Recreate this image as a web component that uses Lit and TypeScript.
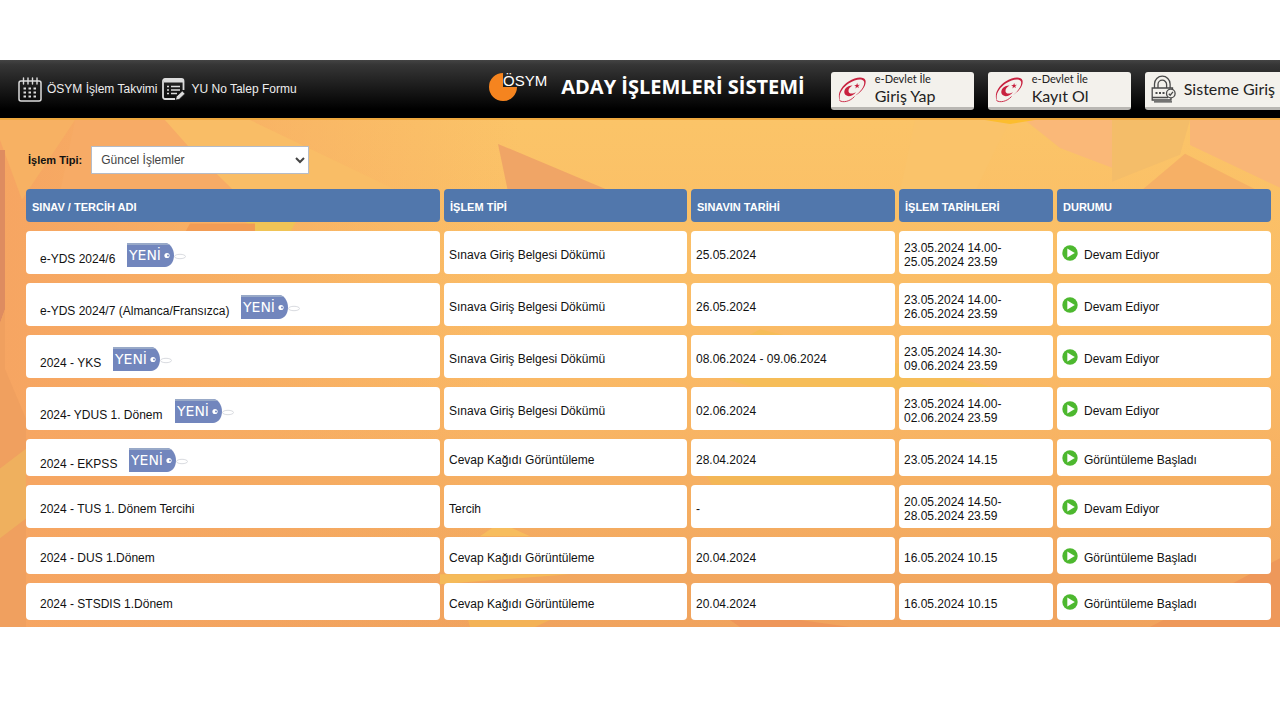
import { LitElement, html, css, svg, unsafeCSS } from "lit";
import { customElement, property, state } from "lit/decorators.js";

interface Exam {
  name: string;
  isNew: boolean;
  type: string;
  date: string;
  period: string[];
  status: string;
}

const DOCUMENT = "Sınava Giriş Belgesi Dökümü";
const ANSWERS = "Cevap Kağıdı Görüntüleme";
const OPEN = "Devam Ediyor";
const STARTED = "Görüntüleme Başladı";

const EXAMS: Exam[] = [
  { name: "e-YDS 2024/6", isNew: true, type: DOCUMENT, date: "25.05.2024", period: ["23.05.2024 14.00-", "25.05.2024 23.59"], status: OPEN },
  { name: "e-YDS 2024/7 (Almanca/Fransızca)", isNew: true, type: DOCUMENT, date: "26.05.2024", period: ["23.05.2024 14.00-", "26.05.2024 23.59"], status: OPEN },
  { name: "2024 - YKS", isNew: true, type: DOCUMENT, date: "08.06.2024 - 09.06.2024", period: ["23.05.2024 14.30-", "09.06.2024 23.59"], status: OPEN },
  { name: "2024- YDUS 1. Dönem", isNew: true, type: DOCUMENT, date: "02.06.2024", period: ["23.05.2024 14.00-", "02.06.2024 23.59"], status: OPEN },
  { name: "2024 - EKPSS", isNew: true, type: ANSWERS, date: "28.04.2024", period: ["23.05.2024 14.15"], status: STARTED },
  { name: "2024 - TUS 1. Dönem Tercihi", isNew: false, type: "Tercih", date: "-", period: ["20.05.2024 14.50-", "28.05.2024 23.59"], status: OPEN },
  { name: "2024 - DUS 1.Dönem", isNew: false, type: ANSWERS, date: "20.04.2024", period: ["16.05.2024 10.15"], status: STARTED },
  { name: "2024 - STSDIS 1.Dönem", isNew: false, type: ANSWERS, date: "20.04.2024", period: ["16.05.2024 10.15"], status: STARTED },
];

const BACKDROP = encodeURIComponent(`<svg xmlns="http://www.w3.org/2000/svg" viewBox="0 0 1280 509" preserveAspectRatio="none">
<defs>
<linearGradient id="v" x1="0" y1="0" x2="0" y2="1"><stop offset="0" stop-color="#fbc468"/><stop offset=".5" stop-color="#fab965"/><stop offset="1" stop-color="#f0a35e"/></linearGradient>
<linearGradient id="l" x1="0" y1="0" x2="1" y2="0"><stop offset="0" stop-color="#f6a562"/><stop offset="1" stop-color="#f6a562" stop-opacity="0"/></linearGradient>
</defs>
<rect width="1280" height="509" fill="url(#v)"/>
<rect width="520" height="509" fill="url(#l)"/>
<path d="M0 0H75L22 80L0 20Z" fill="#f7b163"/>
<path d="M75 0H165L235 72H60Z" fill="#f7ab66"/>
<path d="M165 0H250L400 72H235L188 26Z" fill="#f9bd66"/>
<path d="M220 72H312L290 113H255Z" fill="#f0c456"/>
<path d="M190 104H255V113H185Z" fill="#f29c55"/>
<path d="M498 24L612 72H508Z" fill="#f0a566"/>
<path d="M900 72L915 0H1010L975 72Z" fill="#fac36a"/>
<path d="M1025 0H1112V48L1060 28Z" fill="#fab878"/>
<path d="M1112 0H1190L1180 35L1112 62Z" fill="#f4bd69"/>
<path d="M1190 0H1280V68L1190 25Z" fill="#f9b676"/>
<path d="M1140 72L1185 34L1260 72Z" fill="#f6b066"/>
<path d="M985 0H1035L1010 4Z" fill="#fcbd2e"/>
<path d="M0 30H5V190L0 204Z" fill="#de8c60"/>
<path d="M0 204L5 190V250L26 300V509H0Z" fill="#f0a05f"/>
<path d="M0 350L26 330V400L0 420Z" fill="#efb05e"/>
<path d="M690 250L760 210L1000 270H760Z" fill="#f6bd58"/>
<path d="M480 418L500 404L530 418Z" fill="#f7bd5e"/>
<path d="M706 357H850V366H712Z" fill="#f3b757"/>
<path d="M440 456H570L440 466Z" fill="#f5bb5a"/>
<path d="M468 502H550L535 509H470Z" fill="#f3b257"/>
<path d="M730 502H800L850 509H740Z" fill="#ee965a"/>
<path d="M1150 509L1280 440V509Z" fill="#ee985a"/>
</svg>`);

const calendarIcon = svg`
  <svg viewBox="0 0 24 25" width="24" height="25" aria-hidden="true">
    <g fill="none" stroke="#dcdcdc">
      <rect x="1" y="4" width="22" height="20" rx="2" stroke-width="1.500"/>
      <path d="M5.500 1v6M10 1v6M14.500 1v6M19 1v6" stroke-width="1.400" stroke-linecap="round"/>
      <path d="M5.500 11.500h2.500m2.500 0h2.500m2.500 0h2.500M5.500 15.500h2.500m2.500 0h2.500m2.500 0h2.500M5.500 19.500h2.500m2.500 0h2.500m2.500 0h2.500" stroke-width="2.200"/>
    </g>
  </svg>`;

const formIcon = svg`
  <svg viewBox="0 0 24 24" width="24" height="24" aria-hidden="true">
    <path d="M13 22H3A2 2 0 0 1 1 20V4A2 2 0 0 1 3 2H19.500A2 2 0 0 1 21.500 4V13" fill="none" stroke="#dcdcdc" stroke-width="1.800"/>
    <path d="M2 2.500h19v3H2z" fill="#dcdcdc"/>
    <path d="M5 9.500h2m2 0h9M5 13h2m2 0h9M5 16.500h2m2 0h6" stroke="#dcdcdc" stroke-width="1.700"/>
    <path d="M13.500 23l1-3.600 5.800-5.400 2.700 2.700-5.800 5.600z" fill="#dcdcdc" stroke="#1c1c1c" stroke-width=".7"/>
  </svg>`;

const devletIcon = svg`
  <svg viewBox="0 0 30 27" width="30" height="27" aria-hidden="true">
    <path d="M3.500 25.500C-.5 20 3 11 11.500 5.500C19 .8 27 .2 28.500 4.500C29.600 9.500 24.500 16 18 19.800C24 15.500 28.300 9.500 27 5.500C25.300 2.300 18.500 3 12 7.300C4.500 12.300.8 19.500 3.500 25.500Z" fill="#c8213f"/>
    <path d="M2.500 24.500C6 27 13 25.500 17.500 20.500" fill="none" stroke="#c8213f" stroke-width=".9"/>
    <path d="M15.500 9.500C11 9.300 7 12.500 7.300 16.600C7.700 21 14.500 21.800 19 16.200C15.500 18.300 11.800 18 11.500 15.200C11.300 12.800 13 11 15.500 9.500Z" fill="#c8213f"/>
    <path d="M20.200 7l.6 2 2.200-.2-1.800 1.300.7 2-1.800-1.100-1.600 1.400.4-2.200-1.800-.9 2.200-.4z" fill="#c8213f"/>
  </svg>`;

const lockIcon = svg`
  <svg viewBox="0 0 25 28" width="25" height="28" aria-hidden="true">
    <g fill="none" stroke="#4a4a4a" stroke-width="1.300">
      <path d="M3.500 13V9a7.800 7.800 0 0 1 15.600 0V13M7 13V9.500a4.300 4.300 0 0 1 8.600 0V13"/>
      <path d="M17 22.500H1.200V13H21.500v2M1.200 22.500v2.500H20v-2M3 26.800H21"/>
      <circle cx="19.800" cy="18.500" r="4.300" fill="#f3f1ec"/>
      <path d="M17.800 18.700l1.400 1.500 2.800-3.300"/>
      <path d="M4.500 18h2m1.500 0h2m1.500 0h2" stroke-width="1.800"/>
    </g>
  </svg>`;

@customElement("new-tag")
class NewTag extends LitElement {
  static styles = css`
    :host { display: block; }
    .tag { display: block; font-family: "DejaVu Sans", Verdana, sans-serif; }
  `;

  render() {
    return html`
      <svg class="tag" viewBox="0 0 60 26" width="60" height="26" role="img" aria-label="YENİ">
        <path d="M0 1H38C43 1 47 7 47 13.500S43 25 38 25H0Z" fill="#7286bd"/>
        <path d="M0 1H38C40 1 42 2 43 3H0Z" fill="#98a9c8"/>
        <text x="2" y="18" fill="#fff" font-size="14">YENİ</text>
        <circle cx="40" cy="13.500" r="2.600" fill="#fff"/>
        <circle cx="41" cy="13.500" r="1" fill="#7286bd"/>
        <ellipse cx="53" cy="14.500" rx="5.500" ry="2.200" fill="none" stroke="#d9dbe0" stroke-width="1"/>
      </svg>
    `;
  }
}

@customElement("exam-table")
class ExamTable extends LitElement {
  @property({ attribute: false }) exams: Exam[] = [];

  static styles = css`
    :host { display: block; }
    .table {
      width: 100%;
      table-layout: fixed;
      border-collapse: separate;
      border-spacing: 4px 9px;
      font-size: 12px;
      line-height: 14px;
      color: #111;
    }
    .c-name { width: 414px; }
    .c-type { width: 243px; }
    .c-date { width: 204px; }
    .c-period { width: 154px; }
    .c-status { width: 214px; }
    .head {
      box-sizing: border-box;
      height: 33px;
      padding: 2px 6px 0;
      border-radius: 4px;
      background: #5177ac;
      color: #fff;
      font-size: 11px;
      font-weight: bold;
      text-align: left;
    }
    .cell {
      box-sizing: border-box;
      height: 37px;
      padding: 10px 5px 5px;
      border-radius: 4px;
      background: #fff;
      vertical-align: middle;
    }
    .name-cell { padding: 8px 5px 3px 14px; }
    .name { display: flex; align-items: flex-end; gap: 12px; line-height: 18px; }
    .line { display: block; }
    .status { display: flex; align-items: center; gap: 6px; }
    .play { flex: none; margin-bottom: 4px; }
  `;

  render() {
    return html`
      <table class="table">
        <colgroup>
          <col class="c-name"><col class="c-type"><col class="c-date"><col class="c-period"><col class="c-status">
        </colgroup>
        <thead>
          <tr>
            ${["SINAV / TERCİH ADI", "İŞLEM TİPİ", "SINAVIN TARİHİ", "İŞLEM TARİHLERİ", "DURUMU"].map(
              (title) => html`<th class="head" scope="col">${title}</th>`,
            )}
          </tr>
        </thead>
        <tbody>
          ${this.exams.map(
            (exam) => html`
              <tr>
                <td class="cell name-cell">
                  <div class="name"><span>${exam.name}</span>${exam.isNew ? html`<new-tag></new-tag>` : null}</div>
                </td>
                <td class="cell">${exam.type}</td>
                <td class="cell">${exam.date}</td>
                <td class="cell">${exam.period.map((line) => html`<span class="line">${line}</span>`)}</td>
                <td class="cell">
                  <div class="status">
                    <svg class="play" viewBox="0 0 16 16" width="16" height="16" aria-hidden="true">
                      <circle cx="8" cy="8" r="7.700" fill="#4db82f"/>
                      <path d="M5.300 3.600L12.800 8L5.300 12.400Z" fill="#fff"/>
                    </svg>
                    <span>${exam.status}</span>
                  </div>
                </td>
              </tr>
            `,
          )}
        </tbody>
      </table>
    `;
  }
}

@customElement("app-root")
class AppRoot extends LitElement {
  @state() private filter = "Güncel İşlemler";

  static styles = css`
    :host {
      display: block;
      padding: 60px 0;
      overflow: hidden;
      background: #fff;
      font-family: "Liberation Sans", Arial, sans-serif;
    }
    .bar {
      display: grid;
      grid-template-columns: 1fr auto 1fr;
      align-items: center;
      height: 58px;
      background: linear-gradient(#444 0, #363636 8%, #000 85%);
      color: #fff;
    }
    .links { display: flex; align-items: center; gap: 5px; padding-left: 18px; }
    .link {
      display: flex;
      align-items: center;
      gap: 5px;
      color: #eee;
      font-size: 12px;
      line-height: 14px;
      text-decoration: none;
      white-space: nowrap;
    }
    .brand { display: flex; align-items: center; gap: 12px; padding: 0 0 4px 14px; }
    .title { margin: 0; font: 700 20px/24px "Open Sans", sans-serif; white-space: nowrap; }
    .actions { display: flex; gap: 14px; margin-top: 3px; padding-left: 26px; width: 0; }
    .action {
      display: flex;
      flex: none;
      align-items: center;
      box-sizing: border-box;
      width: 143px;
      height: 38px;
      padding: 0 6px;
      gap: 8px;
      border: 0;
      border-bottom: 3px solid #b9b7b3;
      border-radius: 3px;
      background: #f3f1ec;
      color: #222;
      font: 16px/20px Lato, sans-serif;
      text-align: left;
      white-space: nowrap;
    }
    .small { display: block; font-size: 11px; line-height: 14px; }
    .big { display: block; }
    .page {
      display: flow-root;
      padding: 26px 5px 0 22px;
      background: url("data:image/svg+xml,${unsafeCSS(BACKDROP)}") 0 0 / 100% 100%;
      border-top: 2px solid #efa83e;
    }
    .filter { display: flex; align-items: center; gap: 9px; padding: 0 0 6px 6px; }
    .label { font-size: 11px; line-height: 14px; font-weight: bold; color: #111; }
    .select {
      width: 218px;
      height: 28px;
      padding: 0 5px;
      border: 1px solid #b5bcc8;
      border-radius: 0;
      background: #fff;
      color: #444;
      font: 12px "Liberation Sans", Arial, sans-serif;
    }
    .list { margin-bottom: -2px; }
  `;

  render() {
    return html`
      <header class="bar">
        <nav class="links">
          <a class="link" href="#takvim">${calendarIcon}ÖSYM İşlem Takvimi</a>
          <a class="link" href="#form">${formIcon}YU No Talep Formu</a>
        </nav>
        <div class="brand">
          <svg viewBox="0 0 60 32" width="60" height="32" role="img" aria-label="ÖSYM">
            <path d="M14 2A14 14 0 1 0 28 16H14Z" fill="#f5841f"/>
            <text x="14" y="15" font-size="15" fill="#fff">ÖSYM</text>
          </svg>
          <h1 class="title">ADAY İŞLEMLERİ SİSTEMİ</h1>
        </div>
        <div class="actions">
          <button class="action" type="button">${devletIcon}<span><span class="small">e-Devlet İle</span><span class="big">Giriş Yap</span></span></button>
          <button class="action" type="button">${devletIcon}<span><span class="small">e-Devlet İle</span><span class="big">Kayıt Ol</span></span></button>
          <button class="action" type="button">${lockIcon}<span>Sisteme Giriş</span></button>
        </div>
      </header>
      <main class="page">
        <div class="filter">
          <label class="label" for="type">İşlem Tipi:</label>
          <select class="select" id="type" .value=${this.filter} @change=${(e: Event) => (this.filter = (e.target as HTMLSelectElement).value)}>
            <option>Güncel İşlemler</option>
            <option>Tüm İşlemler</option>
          </select>
        </div>
        <exam-table class="list" .exams=${EXAMS}></exam-table>
      </main>
    `;
  }
}
